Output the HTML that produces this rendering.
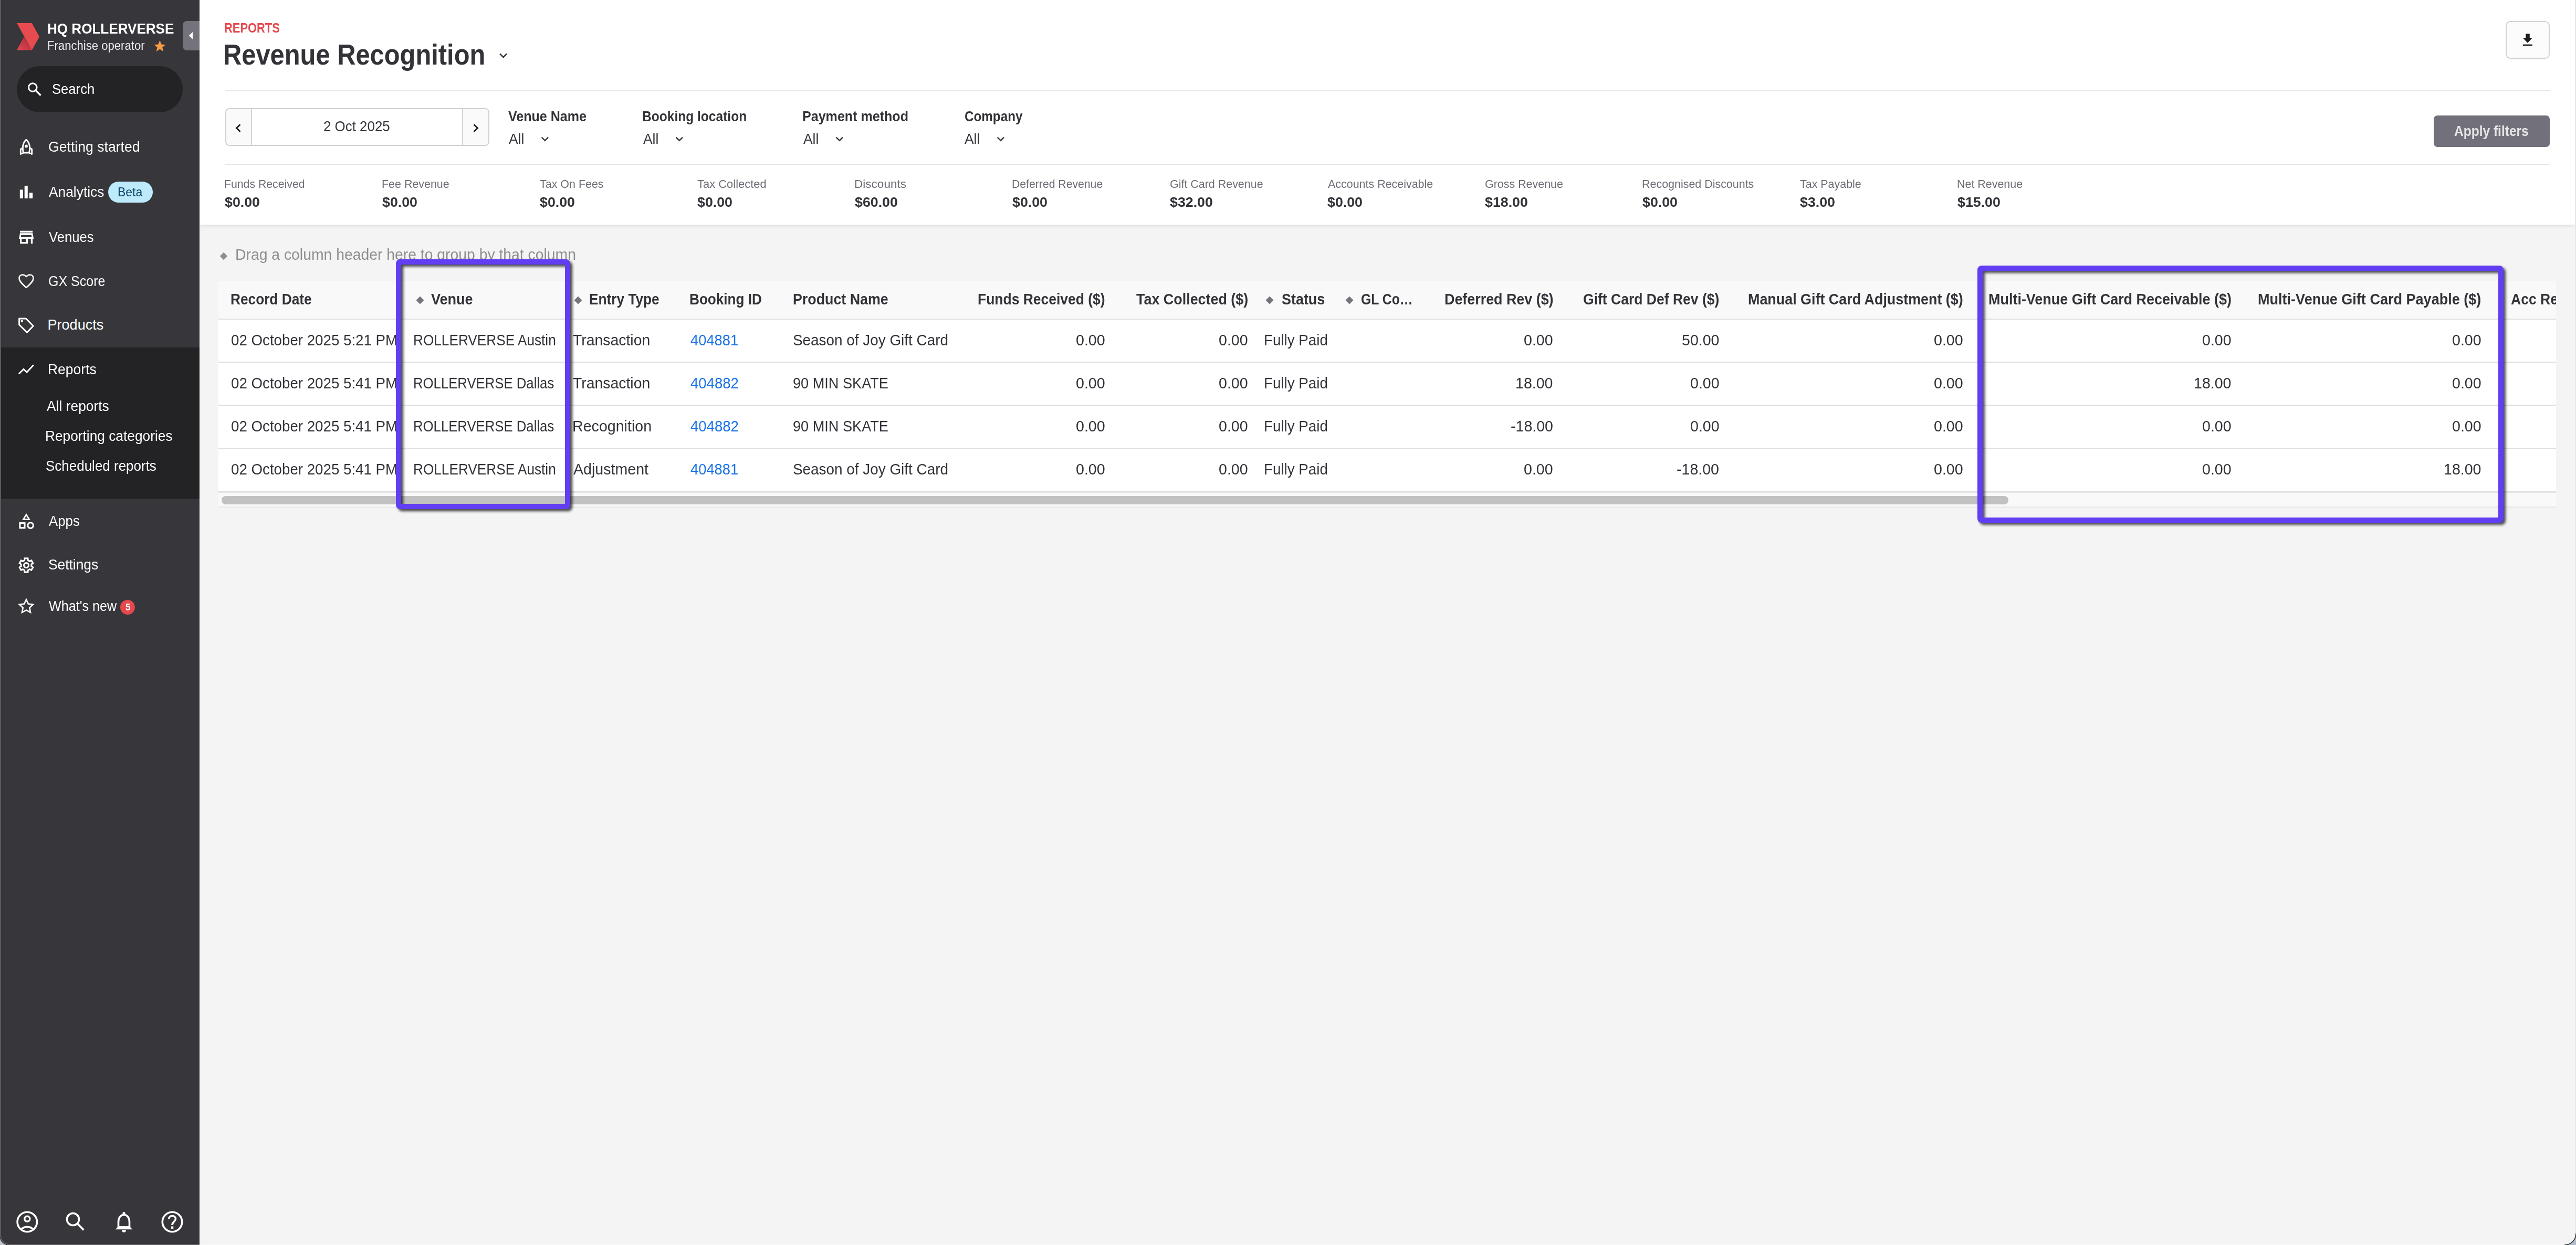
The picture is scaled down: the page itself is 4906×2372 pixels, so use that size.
<!DOCTYPE html>
<html><head><meta charset="utf-8"><title>Revenue Recognition</title>
<style>
html,body{margin:0;padding:0;}
body{width:4906px;height:2372px;overflow:hidden;position:relative;background:#f4f4f4;font-family:"Liberation Sans",sans-serif;}
.t{position:absolute;white-space:nowrap;line-height:1;transform-origin:0 0;}
svg{overflow:visible}
</style></head><body>

<div style="position:absolute;left:380.0px;top:0.0px;width:4524.0px;height:428.0px;background:#ffffff;box-shadow:0 2px 7px rgba(0,0,0,0.10);z-index:1"></div>
<div style="position:absolute;left:0;top:0;width:4906px;height:2372px;z-index:2">
<div class="t" style="left:427.0px;top:41.1px;font-size:25.0px;font-weight:bold;color:#e5484d;transform:scaleX(0.8753);">REPORTS</div>
<div class="t" style="left:425.2px;top:76.4px;font-size:56.0px;font-weight:bold;color:#333238;transform:scaleX(0.8722);">Revenue Recognition</div>
<svg style="position:absolute;left:945.0px;top:95.0px;" width="27.0" height="22.0" viewBox="945.00 95.00 27.00 22.00"><polyline points="952,102.3 958.6,108.9 965.2,102.3" fill="none" stroke="#333238" stroke-width="2.5"/></svg>
<div style="position:absolute;left:4772.3px;top:40.1px;width:79.5px;height:67.6px;border:2px solid #d2d2d5;border-radius:9px;background:#fcfcfc"></div>
<svg style="position:absolute;left:4800.0px;top:60.0px;" width="30.0" height="32.0" viewBox="4800.00 60.00 30.00 32.00"><path d="M4810.3 64.3H4817.8V72.3H4822.9L4813.85 81.7L4804.8 72.3H4810.3Z" fill="#1c1c1c"/><rect x="4804.8" y="84.6" width="18.1" height="2.6" fill="#1c1c1c"/></svg>
<div style="position:absolute;left:428.5px;top:172.0px;width:4427.3px;height:2.0px;background:#e6e6e6;"></div>
<div style="position:absolute;left:428.5px;top:205.8px;width:499.5px;height:68px;border:2px solid #d0d0d3;border-radius:8px;background:#fff;overflow:hidden"><div style="position:absolute;left:0;top:0;width:47.3px;height:68px;background:#fafafa;border-right:2px solid #d3d3d6"></div><div style="position:absolute;left:449.3px;top:0;width:50.2px;height:68px;background:#fafafa;border-left:2px solid #d3d3d6"></div></div>
<svg style="position:absolute;left:440.0px;top:230.0px;" width="30.0" height="30.0" viewBox="440.00 230.00 30.00 30.00"><polyline points="457.5,237.3 450.5,244.1 457.5,250.9" fill="none" stroke="#1c1c1c" stroke-width="2.8"/></svg>
<svg style="position:absolute;left:895.0px;top:230.0px;" width="30.0" height="30.0" viewBox="895.00 230.00 30.00 30.00"><polyline points="902.5,237.3 909.5,244.1 902.5,250.9" fill="none" stroke="#1c1c1c" stroke-width="2.8"/></svg>
<div class="t" style="left:616.2px;top:227.4px;font-size:28.0px;color:#333238;transform:scaleX(0.9249);">2 Oct 2025</div>
<div class="t" style="left:968.4px;top:208.2px;font-size:27.5px;font-weight:bold;color:#333238;transform:scaleX(0.9108);">Venue Name</div>
<div class="t" style="left:968.6px;top:251.0px;font-size:28.0px;color:#333238;transform:scaleX(0.9402);">All</div>
<svg style="position:absolute;left:1023.6px;top:255.0px;" width="30.0" height="20.0" viewBox="1023.60 255.00 30.00 20.00"><polyline points="1031.2,261.6 1037.4,267.8 1043.6,261.6"  fill="none" stroke="#333238" stroke-width="2.5"/></svg>
<div class="t" style="left:1223.4px;top:208.2px;font-size:27.5px;font-weight:bold;color:#333238;transform:scaleX(0.8929);">Booking location</div>
<div class="t" style="left:1225.0px;top:251.0px;font-size:28.0px;color:#333238;transform:scaleX(0.9402);">All</div>
<svg style="position:absolute;left:1280.0px;top:255.0px;" width="30.0" height="20.0" viewBox="1280.00 255.00 30.00 20.00"><polyline points="1287.6,261.6 1293.8,267.8 1300.0,261.6"  fill="none" stroke="#333238" stroke-width="2.5"/></svg>
<div class="t" style="left:1528.4px;top:208.2px;font-size:27.5px;font-weight:bold;color:#333238;transform:scaleX(0.9115);">Payment method</div>
<div class="t" style="left:1530.0px;top:251.0px;font-size:28.0px;color:#333238;transform:scaleX(0.9402);">All</div>
<svg style="position:absolute;left:1585.0px;top:255.0px;" width="30.0" height="20.0" viewBox="1585.00 255.00 30.00 20.00"><polyline points="1592.6,261.6 1598.8,267.8 1605.0,261.6"  fill="none" stroke="#333238" stroke-width="2.5"/></svg>
<div class="t" style="left:1836.5px;top:208.2px;font-size:27.5px;font-weight:bold;color:#333238;transform:scaleX(0.8813);">Company</div>
<div class="t" style="left:1837.4px;top:251.0px;font-size:28.0px;color:#333238;transform:scaleX(0.9402);">All</div>
<svg style="position:absolute;left:1892.4px;top:255.0px;" width="30.0" height="20.0" viewBox="1892.40 255.00 30.00 20.00"><polyline points="1900.0,261.6 1906.2,267.8 1912.4,261.6"  fill="none" stroke="#333238" stroke-width="2.5"/></svg>
<div style="position:absolute;left:4635px;top:219.9px;width:220.9px;height:59.9px;border-radius:7px;background:#72717b"></div>
<div class="t" style="left:4674.2px;top:235.9px;font-size:27.5px;font-weight:bold;color:#e6e6e6;transform:scaleX(0.8917);">Apply filters</div>
<div style="position:absolute;left:428.5px;top:312.0px;width:4427.3px;height:2.0px;background:#e6e6e6;"></div>
<div class="t" style="left:427.3px;top:339.0px;font-size:22.7px;color:#6e6d75;transform:scaleX(0.9364);">Funds Received</div>
<div class="t" style="left:428.3px;top:371.7px;font-size:26.5px;font-weight:bold;color:#333238;transform:scaleX(1.0100);">$0.00</div>
<div class="t" style="left:727.2px;top:339.0px;font-size:22.7px;color:#6e6d75;transform:scaleX(0.9450);">Fee Revenue</div>
<div class="t" style="left:728.3px;top:371.7px;font-size:26.5px;font-weight:bold;color:#333238;transform:scaleX(1.0100);">$0.00</div>
<div class="t" style="left:1028.4px;top:339.0px;font-size:22.7px;color:#6e6d75;transform:scaleX(0.9450);">Tax On Fees</div>
<div class="t" style="left:1028.3px;top:371.7px;font-size:26.5px;font-weight:bold;color:#333238;transform:scaleX(1.0100);">$0.00</div>
<div class="t" style="left:1328.4px;top:339.0px;font-size:22.7px;color:#6e6d75;transform:scaleX(0.9677);">Tax Collected</div>
<div class="t" style="left:1328.3px;top:371.7px;font-size:26.5px;font-weight:bold;color:#333238;transform:scaleX(1.0100);">$0.00</div>
<div class="t" style="left:1627.2px;top:339.0px;font-size:22.7px;color:#6e6d75;transform:scaleX(0.9943);">Discounts</div>
<div class="t" style="left:1628.3px;top:371.7px;font-size:26.5px;font-weight:bold;color:#333238;transform:scaleX(1.0100);">$60.00</div>
<div class="t" style="left:1927.3px;top:339.0px;font-size:22.7px;color:#6e6d75;transform:scaleX(0.9342);">Deferred Revenue</div>
<div class="t" style="left:1928.3px;top:371.7px;font-size:26.5px;font-weight:bold;color:#333238;transform:scaleX(1.0100);">$0.00</div>
<div class="t" style="left:2227.9px;top:339.0px;font-size:22.7px;color:#6e6d75;transform:scaleX(0.9450);">Gift Card Revenue</div>
<div class="t" style="left:2228.3px;top:371.7px;font-size:26.5px;font-weight:bold;color:#333238;transform:scaleX(1.0100);">$32.00</div>
<div class="t" style="left:2528.9px;top:339.0px;font-size:22.7px;color:#6e6d75;transform:scaleX(0.9450);">Accounts Receivable</div>
<div class="t" style="left:2528.3px;top:371.7px;font-size:26.5px;font-weight:bold;color:#333238;transform:scaleX(1.0100);">$0.00</div>
<div class="t" style="left:2827.9px;top:339.0px;font-size:22.7px;color:#6e6d75;transform:scaleX(0.9450);">Gross Revenue</div>
<div class="t" style="left:2828.3px;top:371.7px;font-size:26.5px;font-weight:bold;color:#333238;transform:scaleX(1.0100);">$18.00</div>
<div class="t" style="left:3127.2px;top:339.0px;font-size:22.7px;color:#6e6d75;transform:scaleX(0.9450);">Recognised Discounts</div>
<div class="t" style="left:3128.3px;top:371.7px;font-size:26.5px;font-weight:bold;color:#333238;transform:scaleX(1.0100);">$0.00</div>
<div class="t" style="left:3428.4px;top:339.0px;font-size:22.7px;color:#6e6d75;transform:scaleX(0.9450);">Tax Payable</div>
<div class="t" style="left:3428.3px;top:371.7px;font-size:26.5px;font-weight:bold;color:#333238;transform:scaleX(1.0100);">$3.00</div>
<div class="t" style="left:3727.2px;top:339.0px;font-size:22.7px;color:#6e6d75;transform:scaleX(0.9450);">Net Revenue</div>
<div class="t" style="left:3728.3px;top:371.7px;font-size:26.5px;font-weight:bold;color:#333238;transform:scaleX(1.0100);">$15.00</div>
</div>
<div style="position:absolute;left:0;top:0;width:380px;height:2372px;background:#37363b;z-index:3">
<div style="position:absolute;left:0.0px;top:0.0px;width:2.0px;height:2372.0px;background:#5b5b5f;"></div>
<div style="position:absolute;left:2.0px;top:661.7px;width:378.0px;height:288.3px;background:#232326;"></div>
<svg style="position:absolute;left:30.0px;top:42.0px;" width="48.0" height="56.0" viewBox="30.00 42.00 48.00 56.00"><defs><linearGradient id="lg" x1="0" y1="1" x2="1" y2="0"><stop offset="0" stop-color="#e24a52"/><stop offset="1" stop-color="#a52636"/></linearGradient></defs><polygon points="45.8,69.9 60.7,95.6 32,95.6" fill="url(#lg)"/><polygon points="32,44 60.7,44 74.9,69.9 60.7,95.6" fill="#e84b4f"/></svg>
<div class="t" style="left:89.7px;top:41.3px;font-size:27.5px;font-weight:bold;color:#ffffff;transform:scaleX(0.9478);">HQ ROLLERVERSE</div>
<div class="t" style="left:89.7px;top:75.8px;font-size:23.0px;color:#ececee;transform:scaleX(0.9613);">Franchise operator</div>
<svg style="position:absolute;left:290.0px;top:74.0px;" width="28.0" height="28.0" viewBox="290.00 74.00 28.00 28.00"><path d="M304.4 77 L307.5 84.6 L315.3 85.2 L309.3 90.3 L311.2 98 L304.4 93.8 L297.6 98 L299.5 90.3 L293.5 85.2 L301.3 84.6 Z" fill="#f59a45"/></svg>
<div style="position:absolute;left:348px;top:40px;width:32px;height:56px;background:#74737b;border-radius:8px 0 0 8px"></div>
<svg style="position:absolute;left:355.0px;top:58.0px;" width="16.0" height="20.0" viewBox="355.00 58.00 16.00 20.00"><polygon points="359.7,68 367,61 367,74.8" fill="#fff"/></svg>
<div style="position:absolute;left:32px;top:126px;width:316px;height:88px;background:#232326;border-radius:44px"></div>
<svg style="position:absolute;left:48.0px;top:150.0px;" width="36.0" height="36.0" viewBox="48.00 150.00 36.00 36.00"><circle cx="62.3" cy="166.5" r="7.8" fill="none" stroke="#fff" stroke-width="3"/><line x1="67.8" y1="172" x2="77.5" y2="181.7" stroke="#fff" stroke-width="3.4"/></svg>
<div class="t" style="left:99.2px;top:156.7px;font-size:27.0px;color:#ffffff;transform:scaleX(0.9491);">Search</div>
<div class="t" style="left:91.6px;top:267.0px;font-size:27.0px;color:#ffffff;transform:scaleX(0.9856);">Getting started</div>
<div class="t" style="left:92.8px;top:353.0px;font-size:27.0px;color:#ffffff;transform:scaleX(0.9757);">Analytics</div>
<div class="t" style="left:92.6px;top:439.0px;font-size:27.0px;color:#ffffff;transform:scaleX(0.9499);">Venues</div>
<div class="t" style="left:91.6px;top:523.0px;font-size:27.0px;color:#ffffff;transform:scaleX(0.9258);">GX Score</div>
<div class="t" style="left:90.6px;top:606.0px;font-size:27.0px;color:#ffffff;">Products</div>
<div class="t" style="left:90.6px;top:691.0px;font-size:27.0px;color:#ffffff;transform:scaleX(0.9808);">Reports</div>
<div class="t" style="left:92.8px;top:979.6px;font-size:27.0px;color:#ffffff;transform:scaleX(0.9554);">Apps</div>
<div class="t" style="left:91.6px;top:1063.0px;font-size:27.0px;color:#ffffff;transform:scaleX(0.9753);">Settings</div>
<div class="t" style="left:92.6px;top:1141.5px;font-size:27.0px;color:#ffffff;transform:scaleX(0.9314);">What's new</div>
<div class="t" style="left:88.5px;top:760.8px;font-size:27.0px;color:#ffffff;transform:scaleX(0.9776);">All reports</div>
<div class="t" style="left:86.3px;top:817.8px;font-size:27.0px;color:#ffffff;transform:scaleX(0.9732);">Reporting categories</div>
<div class="t" style="left:87.3px;top:875.0px;font-size:27.0px;color:#ffffff;transform:scaleX(0.9622);">Scheduled reports</div>
<div style="position:absolute;left:206px;top:345.7px;width:84.8px;height:40.5px;background:#bdebfc;border-radius:20.25px"></div>
<div class="t" style="left:224.2px;top:353.9px;font-size:24.6px;color:#0f4468;transform:scaleX(0.9340);">Beta</div>
<div style="position:absolute;left:229px;top:1142.7px;width:28px;height:28px;background:#e5484d;border-radius:50%"></div>
<div class="t" style="left:238.5px;top:1149.1px;font-size:17.5px;font-weight:bold;color:#ffffff;transform:scaleX(0.9486);">5</div>
<svg style="position:absolute;left:34.0px;top:262.0px;" width="32.0" height="36.0" viewBox="34.00 262.00 32.00 36.00"><path d="M50 266.2 C45.5 270 43.3 276 43.3 282.5 C43.3 286 44 289 44.8 291 H55.2 C56 289 56.7 286 56.7 282.5 C56.7 276 54.5 270 50 266.2 Z" fill="none" stroke="#fff" stroke-width="2.9" stroke-linejoin="round"/><circle cx="50" cy="278.4" r="2.9" fill="#fff"/><path d="M43.6 281.5 L39.3 284.3 V293.5 L44.8 291" fill="none" stroke="#fff" stroke-width="2.9" stroke-linejoin="round"/><path d="M56.4 281.5 L60.7 284.3 V293.5 L55.2 291" fill="none" stroke="#fff" stroke-width="2.9" stroke-linejoin="round"/></svg>
<svg style="position:absolute;left:34.0px;top:350.0px;" width="32.0" height="32.0" viewBox="34.00 350.00 32.00 32.00"><rect x="37.8" y="361.4" width="6.1" height="16.6" fill="#fff"/><rect x="46.7" y="353.9" width="6.1" height="24.1" fill="#fff"/><rect x="55.9" y="367.1" width="6.3" height="10.9" fill="#fff"/></svg>
<svg style="position:absolute;left:34.0px;top:436.0px;" width="32.0" height="32.0" viewBox="34.00 436.00 32.00 32.00"><rect x="38" y="439.7" width="24.2" height="3.4" fill="#fff"/><path d="M38 444.2 H62.2 L64.1 455 H36.1 Z M40.3 448 L39.7 451.8 H60.5 L59.9 448 Z" fill="#fff" fill-rule="evenodd"/><path d="M38 455 H41.25 V461 H49.6 V455 H53.15 V464.2 H38 Z" fill="#fff"/><rect x="58.8" y="455" width="3.4" height="9.2" fill="#fff"/></svg>
<svg style="position:absolute;left:32.0px;top:518.0px;" width="36.0" height="36.0" viewBox="32.00 518.00 36.00 36.00"><path d="M50 548 L47.8 546 C40 539 36.5 535 36.5 530 C36.5 526 39.5 523.5 43.2 523.5 C45.6 523.5 48 524.8 50 527 C52 524.8 54.4 523.5 56.8 523.5 C60.5 523.5 63.5 526 63.5 530 C63.5 535 60 539 52.2 546 Z" fill="none" stroke="#fff" stroke-width="2.6" stroke-linejoin="round"/></svg>
<svg style="position:absolute;left:32.0px;top:600.0px;" width="36.0" height="40.0" viewBox="32.00 600.00 36.00 40.00"><path d="M36.6 607 H49.4 L63.3 621 L51.4 633.3 L36.6 618.8 Z" fill="none" stroke="#fff" stroke-width="2.9" stroke-linejoin="round"/><circle cx="41.7" cy="611.8" r="2.2" fill="#fff"/></svg>
<svg style="position:absolute;left:32.0px;top:690.0px;" width="36.0" height="28.0" viewBox="32.00 690.00 36.00 28.00"><polyline points="36,712.2 45,703.2 51,709.2 63.8,695.5" fill="none" stroke="#fff" stroke-width="2.9"/></svg>
<svg style="position:absolute;left:32.0px;top:975.0px;" width="36.0" height="36.0" viewBox="32.00 975.00 36.00 36.00"><path d="M50 980.5 L55.6 989.6 H44.4 Z" fill="none" stroke="#fff" stroke-width="2.7" stroke-linejoin="miter"/><rect x="37.9" y="996.6" width="9.1" height="9.1" fill="none" stroke="#fff" stroke-width="3.1"/><circle cx="58.1" cy="1001.05" r="5.3" fill="none" stroke="#fff" stroke-width="3.1"/></svg>
<svg style="position:absolute;left:32.0px;top:1058.0px;" width="36.0" height="38.0" viewBox="32.00 1058.00 36.00 38.00"><polygon points="46.58,1067.50 46.99,1063.84 53.01,1063.84 53.42,1067.50 56.43,1069.24 59.80,1067.76 62.81,1072.98 59.85,1075.16 59.85,1078.64 62.81,1080.82 59.80,1086.04 56.43,1084.56 53.42,1086.30 53.01,1089.96 46.99,1089.96 46.58,1086.30 43.57,1084.56 40.20,1086.04 37.19,1080.82 40.15,1078.64 40.15,1075.16 37.19,1072.98 40.20,1067.76 43.57,1069.24" fill="none" stroke="#fff" stroke-width="3" stroke-linejoin="miter"/><circle cx="50" cy="1076.9" r="4.5" fill="none" stroke="#fff" stroke-width="3"/></svg>
<svg style="position:absolute;left:32.0px;top:1138.0px;" width="36.0" height="36.0" viewBox="32.00 1138.00 36.00 36.00"><polygon points="50.00,1142.20 53.88,1150.46 62.93,1151.60 56.28,1157.84 57.99,1166.80 50.00,1162.40 42.01,1166.80 43.72,1157.84 37.07,1151.60 46.12,1150.46" fill="none" stroke="#fff" stroke-width="2.6" stroke-linejoin="miter"/></svg>
<svg style="position:absolute;left:28.0px;top:2304.0px;" width="48.0" height="48.0" viewBox="28.00 2304.00 48.00 48.00"><circle cx="51.8" cy="2328" r="18.7" fill="none" stroke="#fff" stroke-width="3.6"/><circle cx="51.8" cy="2322.3" r="5" fill="none" stroke="#fff" stroke-width="3.4"/><path d="M40 2343 C46 2335.5 57.6 2335.5 63.6 2343" fill="none" stroke="#fff" stroke-width="3.6"/></svg>
<svg style="position:absolute;left:120.0px;top:2304.0px;" width="48.0" height="48.0" viewBox="120.00 2304.00 48.00 48.00"><circle cx="139" cy="2323" r="11.5" fill="none" stroke="#fff" stroke-width="3.6"/><line x1="147.2" y1="2331.2" x2="159.3" y2="2343.3" stroke="#fff" stroke-width="3.8"/></svg>
<svg style="position:absolute;left:214.0px;top:2304.0px;" width="44.0" height="48.0" viewBox="214.00 2304.00 44.00 48.00"><path d="M225.5 2340.5 V2328 C225.5 2320 230 2314.5 236 2314.5 C242 2314.5 246.5 2320 246.5 2328 V2340.5" fill="none" stroke="#fff" stroke-width="3.6"/><path d="M219.8 2342.3 H252.3 L246 2336 H226 Z" fill="#fff"/><circle cx="236" cy="2311.5" r="2.6" fill="#fff"/><path d="M232 2344 H240 C240 2346.5 238.2 2348 236 2348 C233.8 2348 232 2346.5 232 2344 Z" fill="#fff"/></svg>
<svg style="position:absolute;left:304.0px;top:2304.0px;" width="48.0" height="48.0" viewBox="304.00 2304.00 48.00 48.00"><circle cx="328" cy="2328" r="18.7" fill="none" stroke="#fff" stroke-width="3.6"/><path d="M321.5 2323 C321.5 2318.8 324.5 2316.5 328 2316.5 C331.8 2316.5 334.5 2319 334.5 2322.3 C334.5 2327.5 328 2327.5 328 2334" fill="none" stroke="#fff" stroke-width="3.6"/><rect x="325.9" y="2336.5" width="4.4" height="4.4" fill="#fff"/></svg>
</div>
<div style="position:absolute;left:0;top:0;width:4906px;height:2372px;z-index:0">
<svg style="position:absolute;left:416.1px;top:477.6px;" width="20.0" height="20.0" viewBox="416.10 477.60 20.00 20.00"><polygon points="426.1,480.4 433.3,487.6 426.1,494.8 418.9,487.6" fill="#8f8f8f"/></svg>
<div class="t" style="left:447.9px;top:470.8px;font-size:28.8px;color:#8e8e8e;transform:scaleX(0.9840);">Drag a column header here to group by that column</div>
<div style="position:absolute;left:416.0px;top:534.8px;width:4452.0px;height:72.2px;background:#f9f9f9;"></div>
<div style="position:absolute;left:416.0px;top:607.0px;width:4452.0px;height:2.0px;background:#dfdfdf;"></div>
<div style="position:absolute;left:416.0px;top:689.0px;width:4452.0px;height:2.0px;background:#dfdfdf;"></div>
<div style="position:absolute;left:416.0px;top:771.0px;width:4452.0px;height:2.0px;background:#dfdfdf;"></div>
<div style="position:absolute;left:416.0px;top:853.0px;width:4452.0px;height:2.0px;background:#dfdfdf;"></div>
<div style="position:absolute;left:416.0px;top:935.0px;width:4452.0px;height:2.0px;background:#dfdfdf;"></div>
<div style="position:absolute;left:416.0px;top:609.0px;width:4452.0px;height:80.0px;background:#ffffff;"></div>
<div style="position:absolute;left:416.0px;top:691.0px;width:4452.0px;height:80.0px;background:#ffffff;"></div>
<div style="position:absolute;left:416.0px;top:773.0px;width:4452.0px;height:80.0px;background:#ffffff;"></div>
<div style="position:absolute;left:416.0px;top:855.0px;width:4452.0px;height:80.0px;background:#ffffff;"></div>
<div style="position:absolute;left:416.0px;top:937.0px;width:4452.0px;height:28.0px;background:#f9f9f9;"></div>
<div style="position:absolute;left:416.0px;top:937.0px;width:4452.0px;height:2.0px;background:#e8e8e8;"></div>
<div style="position:absolute;left:416.0px;top:965.0px;width:4452.0px;height:1.6px;background:#e6e6e6;"></div>
<div style="position:absolute;left:421.7px;top:945px;width:3403.8px;height:16px;background:#c1c1c1;border-radius:8px"></div>
<div class="t" style="left:439.3px;top:556.3px;font-size:29.0px;font-weight:bold;color:#333238;transform:scaleX(0.9048);">Record Date</div>
<svg style="position:absolute;left:789.6px;top:562.3px;" width="20.0" height="20.0" viewBox="789.60 562.30 20.00 20.00"><polygon points="799.6,564.8 807.1,572.3 799.6,579.8 792.1,572.3" fill="#75747c"/></svg>
<div class="t" style="left:821.3px;top:556.3px;font-size:29.0px;font-weight:bold;color:#333238;transform:scaleX(0.9318);">Venue</div>
<svg style="position:absolute;left:1090.7px;top:562.3px;" width="20.0" height="20.0" viewBox="1090.70 562.30 20.00 20.00"><polygon points="1100.7,564.8 1108.2,572.3 1100.7,579.8 1093.2,572.3" fill="#75747c"/></svg>
<div class="t" style="left:1122.2px;top:556.3px;font-size:29.0px;font-weight:bold;color:#333238;transform:scaleX(0.9050);">Entry Type</div>
<div class="t" style="left:1313.4px;top:556.3px;font-size:29.0px;font-weight:bold;color:#333238;transform:scaleX(0.9015);">Booking ID</div>
<div class="t" style="left:1509.5px;top:556.3px;font-size:29.0px;font-weight:bold;color:#333238;transform:scaleX(0.9239);">Product Name</div>
<div class="t" style="left:1861.7px;top:556.3px;font-size:29.0px;font-weight:bold;color:#333238;transform:scaleX(0.9124);">Funds Received ($)</div>
<div class="t" style="left:2163.7px;top:556.3px;font-size:29.0px;font-weight:bold;color:#333238;transform:scaleX(0.9275);">Tax Collected ($)</div>
<svg style="position:absolute;left:2408.3px;top:562.3px;" width="20.0" height="20.0" viewBox="2408.30 562.30 20.00 20.00"><polygon points="2418.3,564.8 2425.8,572.3 2418.3,579.8 2410.8,572.3" fill="#75747c"/></svg>
<div class="t" style="left:2440.5px;top:556.3px;font-size:29.0px;font-weight:bold;color:#333238;transform:scaleX(0.9280);">Status</div>
<svg style="position:absolute;left:2560.3px;top:562.3px;" width="20.0" height="20.0" viewBox="2560.30 562.30 20.00 20.00"><polygon points="2570.3,564.8 2577.8,572.3 2570.3,579.8 2562.8,572.3" fill="#75747c"/></svg>
<div class="t" style="left:2591.9px;top:556.3px;font-size:29.0px;font-weight:bold;color:#333238;transform:scaleX(0.8532);">GL Co…</div>
<div class="t" style="left:2750.6px;top:556.3px;font-size:29.0px;font-weight:bold;color:#333238;transform:scaleX(0.9265);">Deferred Rev ($)</div>
<div class="t" style="left:3014.9px;top:556.3px;font-size:29.0px;font-weight:bold;color:#333238;transform:scaleX(0.9146);">Gift Card Def Rev ($)</div>
<div class="t" style="left:3329.1px;top:556.3px;font-size:29.0px;font-weight:bold;color:#333238;transform:scaleX(0.9270);">Manual Gift Card Adjustment ($)</div>
<div class="t" style="left:3787.1px;top:556.3px;font-size:29.0px;font-weight:bold;color:#333238;transform:scaleX(0.9296);">Multi-Venue Gift Card Receivable ($)</div>
<div class="t" style="left:4299.7px;top:556.3px;font-size:29.0px;font-weight:bold;color:#333238;transform:scaleX(0.9327);">Multi-Venue Gift Card Payable ($)</div>
<div style="position:absolute;left:4760px;top:540px;width:108px;height:66px;overflow:hidden">
<div class="t" style="left:21.7px;top:16.3px;font-size:29.0px;font-weight:bold;color:#333238;transform:scaleX(0.9150);">Acc Receivable ($)</div>
</div>
<div style="position:absolute;left:416px;top:609px;width:344px;height:80px;overflow:hidden">
<div class="t" style="left:24.1px;top:25.0px;font-size:29.0px;color:#333238;transform:scaleX(0.9550);">02 October 2025 5:21 PM</div>
</div>
<div class="t" style="left:787.4px;top:634.0px;font-size:29.0px;color:#333238;transform:scaleX(0.9031);">ROLLERVERSE Austin</div>
<div class="t" style="left:1091.3px;top:634.0px;font-size:29.0px;color:#333238;transform:scaleX(0.9787);">Transaction</div>
<div class="t" style="left:1314.5px;top:634.0px;font-size:29.0px;color:#1b73e8;transform:scaleX(0.9425);">404881</div>
<div class="t" style="left:1510.1px;top:634.0px;font-size:29.0px;color:#333238;transform:scaleX(0.9614);">Season of Joy Gift Card</div>
<div class="t" style="left:2048.6px;top:634.0px;font-size:29.0px;color:#333238;transform:scaleX(0.9850);">0.00</div>
<div class="t" style="left:2321.2px;top:634.0px;font-size:29.0px;color:#333238;transform:scaleX(0.9850);">0.00</div>
<div class="t" style="left:2406.8px;top:634.0px;font-size:29.0px;color:#333238;transform:scaleX(0.9574);">Fully Paid</div>
<div class="t" style="left:2902.4px;top:634.0px;font-size:29.0px;color:#333238;transform:scaleX(0.9850);">0.00</div>
<div class="t" style="left:3202.6px;top:634.0px;font-size:29.0px;color:#333238;transform:scaleX(0.9850);">50.00</div>
<div class="t" style="left:3683.1px;top:634.0px;font-size:29.0px;color:#333238;transform:scaleX(0.9850);">0.00</div>
<div class="t" style="left:4194.3px;top:634.0px;font-size:29.0px;color:#333238;transform:scaleX(0.9850);">0.00</div>
<div class="t" style="left:4669.5px;top:634.0px;font-size:29.0px;color:#333238;transform:scaleX(0.9850);">0.00</div>
<div style="position:absolute;left:416px;top:691px;width:344px;height:80px;overflow:hidden">
<div class="t" style="left:24.1px;top:25.0px;font-size:29.0px;color:#333238;transform:scaleX(0.9550);">02 October 2025 5:41 PM</div>
</div>
<div class="t" style="left:787.4px;top:716.0px;font-size:29.0px;color:#333238;transform:scaleX(0.8869);">ROLLERVERSE Dallas</div>
<div class="t" style="left:1091.3px;top:716.0px;font-size:29.0px;color:#333238;transform:scaleX(0.9787);">Transaction</div>
<div class="t" style="left:1314.5px;top:716.0px;font-size:29.0px;color:#1b73e8;transform:scaleX(0.9499);">404882</div>
<div class="t" style="left:1510.1px;top:716.0px;font-size:29.0px;color:#333238;transform:scaleX(0.9354);">90 MIN SKATE</div>
<div class="t" style="left:2048.6px;top:716.0px;font-size:29.0px;color:#333238;transform:scaleX(0.9850);">0.00</div>
<div class="t" style="left:2321.2px;top:716.0px;font-size:29.0px;color:#333238;transform:scaleX(0.9850);">0.00</div>
<div class="t" style="left:2406.8px;top:716.0px;font-size:29.0px;color:#333238;transform:scaleX(0.9574);">Fully Paid</div>
<div class="t" style="left:2886.4px;top:716.0px;font-size:29.0px;color:#333238;transform:scaleX(0.9850);">18.00</div>
<div class="t" style="left:3218.6px;top:716.0px;font-size:29.0px;color:#333238;transform:scaleX(0.9850);">0.00</div>
<div class="t" style="left:3683.1px;top:716.0px;font-size:29.0px;color:#333238;transform:scaleX(0.9850);">0.00</div>
<div class="t" style="left:4178.3px;top:716.0px;font-size:29.0px;color:#333238;transform:scaleX(0.9850);">18.00</div>
<div class="t" style="left:4669.5px;top:716.0px;font-size:29.0px;color:#333238;transform:scaleX(0.9850);">0.00</div>
<div style="position:absolute;left:416px;top:773px;width:344px;height:80px;overflow:hidden">
<div class="t" style="left:24.1px;top:25.0px;font-size:29.0px;color:#333238;transform:scaleX(0.9550);">02 October 2025 5:41 PM</div>
</div>
<div class="t" style="left:787.4px;top:798.0px;font-size:29.0px;color:#333238;transform:scaleX(0.8869);">ROLLERVERSE Dallas</div>
<div class="t" style="left:1089.8px;top:798.0px;font-size:29.0px;color:#333238;transform:scaleX(0.9866);">Recognition</div>
<div class="t" style="left:1314.5px;top:798.0px;font-size:29.0px;color:#1b73e8;transform:scaleX(0.9499);">404882</div>
<div class="t" style="left:1510.1px;top:798.0px;font-size:29.0px;color:#333238;transform:scaleX(0.9354);">90 MIN SKATE</div>
<div class="t" style="left:2048.6px;top:798.0px;font-size:29.0px;color:#333238;transform:scaleX(0.9850);">0.00</div>
<div class="t" style="left:2321.2px;top:798.0px;font-size:29.0px;color:#333238;transform:scaleX(0.9850);">0.00</div>
<div class="t" style="left:2406.8px;top:798.0px;font-size:29.0px;color:#333238;transform:scaleX(0.9574);">Fully Paid</div>
<div class="t" style="left:2877.0px;top:798.0px;font-size:29.0px;color:#333238;transform:scaleX(0.9850);">-18.00</div>
<div class="t" style="left:3218.6px;top:798.0px;font-size:29.0px;color:#333238;transform:scaleX(0.9850);">0.00</div>
<div class="t" style="left:3683.1px;top:798.0px;font-size:29.0px;color:#333238;transform:scaleX(0.9850);">0.00</div>
<div class="t" style="left:4194.3px;top:798.0px;font-size:29.0px;color:#333238;transform:scaleX(0.9850);">0.00</div>
<div class="t" style="left:4669.5px;top:798.0px;font-size:29.0px;color:#333238;transform:scaleX(0.9850);">0.00</div>
<div style="position:absolute;left:416px;top:855px;width:344px;height:80px;overflow:hidden">
<div class="t" style="left:24.1px;top:25.0px;font-size:29.0px;color:#333238;transform:scaleX(0.9550);">02 October 2025 5:41 PM</div>
</div>
<div class="t" style="left:787.4px;top:880.0px;font-size:29.0px;color:#333238;transform:scaleX(0.9031);">ROLLERVERSE Austin</div>
<div class="t" style="left:1092.0px;top:880.0px;font-size:29.0px;color:#333238;transform:scaleX(0.9858);">Adjustment</div>
<div class="t" style="left:1314.5px;top:880.0px;font-size:29.0px;color:#1b73e8;transform:scaleX(0.9425);">404881</div>
<div class="t" style="left:1510.1px;top:880.0px;font-size:29.0px;color:#333238;transform:scaleX(0.9614);">Season of Joy Gift Card</div>
<div class="t" style="left:2048.6px;top:880.0px;font-size:29.0px;color:#333238;transform:scaleX(0.9850);">0.00</div>
<div class="t" style="left:2321.2px;top:880.0px;font-size:29.0px;color:#333238;transform:scaleX(0.9850);">0.00</div>
<div class="t" style="left:2406.8px;top:880.0px;font-size:29.0px;color:#333238;transform:scaleX(0.9574);">Fully Paid</div>
<div class="t" style="left:2902.4px;top:880.0px;font-size:29.0px;color:#333238;transform:scaleX(0.9850);">0.00</div>
<div class="t" style="left:3193.2px;top:880.0px;font-size:29.0px;color:#333238;transform:scaleX(0.9850);">-18.00</div>
<div class="t" style="left:3683.1px;top:880.0px;font-size:29.0px;color:#333238;transform:scaleX(0.9850);">0.00</div>
<div class="t" style="left:4194.3px;top:880.0px;font-size:29.0px;color:#333238;transform:scaleX(0.9850);">0.00</div>
<div class="t" style="left:4653.5px;top:880.0px;font-size:29.0px;color:#333238;transform:scaleX(0.9850);">18.00</div>
</div>
<div style="position:absolute;left:754.0px;top:494.0px;width:312.0px;height:456.0px;border:10px solid #613ef4;border-radius:8px;filter:drop-shadow(4px 4px 2.5px rgba(0,0,0,0.7));z-index:4"></div>
<div style="position:absolute;left:3765.7px;top:505.7px;width:982.5px;height:470.3px;border:10px solid #613ef4;border-radius:8px;filter:drop-shadow(4px 4px 2.5px rgba(0,0,0,0.7));z-index:4"></div>
<div style="position:absolute;left:4904.0px;top:0.0px;width:2.0px;height:2372.0px;background:#e8e8e8;z-index:5"></div>
<div style="position:absolute;left:380.0px;top:428.0px;width:1.0px;height:1944.0px;background:#ffffff;z-index:0"></div>
<div style="position:absolute;left:0.0px;top:2370.0px;width:380.0px;height:2.0px;background:#5b5b5f;z-index:5"></div>
<div style="position:absolute;left:380.0px;top:2370.0px;width:4524.0px;height:2.0px;background:#f7f7f7;z-index:5"></div>
<svg style="position:absolute;left:0.0px;top:2340.0px;z-index:6" width="40.0" height="32.0" viewBox="0.00 2340.00 40.00 32.00"><path d="M0 2355 A17 17 0 0 0 17 2372 H0 Z" fill="#c6c8d1"/><path d="M0 2355 A17 17 0 0 0 17 2372" fill="none" stroke="#2a2a2e" stroke-width="1.2"/><path d="M1.5 2355 A15.5 15.5 0 0 0 17 2370.5" fill="none" stroke="#5b5b5f" stroke-width="2"/></svg>
<svg style="position:absolute;left:4870.0px;top:2340.0px;z-index:6" width="36.0" height="32.0" viewBox="4870.00 2340.00 36.00 32.00"><path d="M4906 2350 A22 22 0 0 1 4884 2372 H4906 Z" fill="#b3bbca"/><path d="M4906 2350 A22 22 0 0 1 4884 2372" fill="none" stroke="#1e1e22" stroke-width="1.5"/></svg>
</body></html>
